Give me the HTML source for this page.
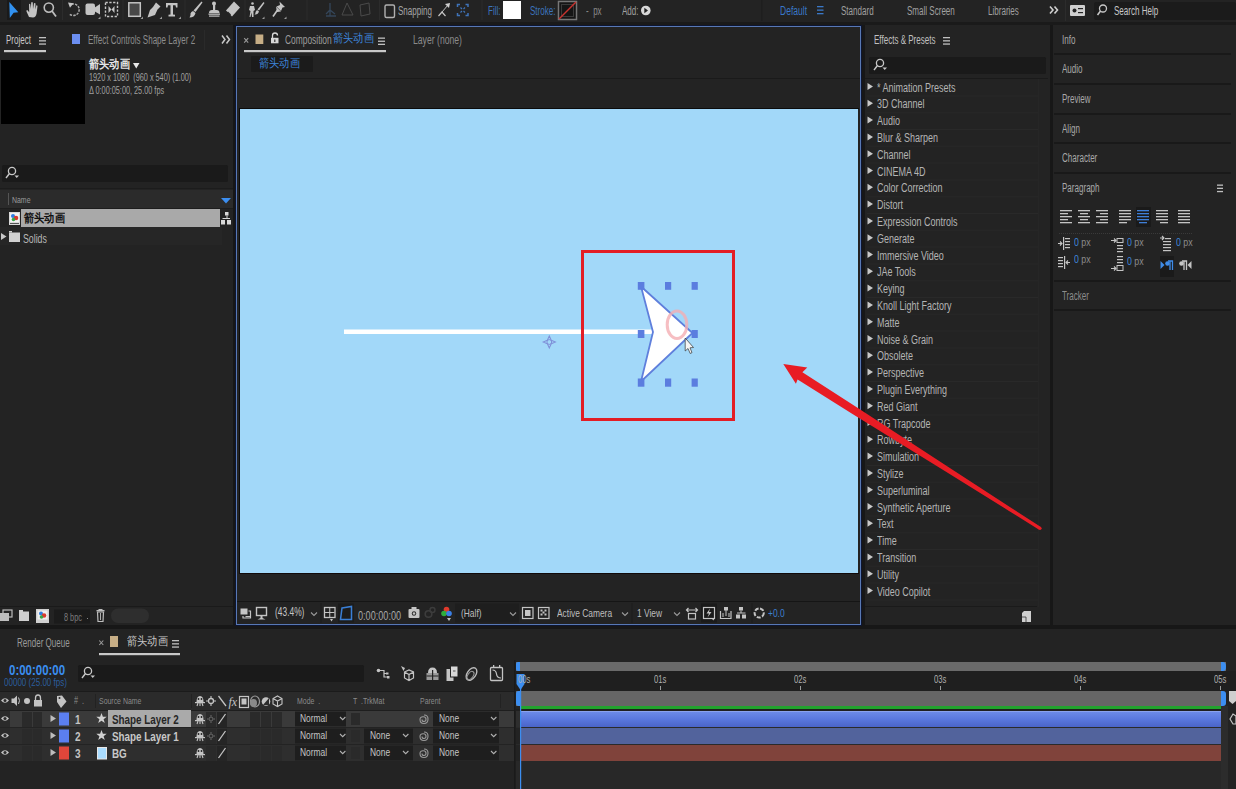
<!DOCTYPE html>
<html><head><meta charset="utf-8">
<style>
*{margin:0;padding:0;box-sizing:border-box}
html,body{width:1236px;height:789px;overflow:hidden;background:#171717}
body{position:relative;font-family:"Liberation Sans",sans-serif;color:#a8a8a8;font-size:11px}
.a{position:absolute}
.t{position:absolute;white-space:nowrap;line-height:1}
.cx{transform-origin:0 50%}
.n{transform:scaleX(.73);transform-origin:0 0}
.m{font-size:12px;transform:scaleX(.67);transform-origin:0 0}
</style></head><body>

<!-- top toolbar -->
<div class="a" style="left:0;top:0;width:1236px;height:22px;background:#232323"></div>
<div class="a" style="left:0;top:22px;width:1236px;height:3px;background:#1a1a1a"></div>
<!-- TOOLBAR -->
<svg class="a" style="left:0;top:0" width="1236" height="22" viewBox="0 0 1236 22">
<rect x="7" y="0" width="14" height="20" fill="#1a1a1a"/>
<polygon points="9.3,2 18.3,12.3 13.6,12.7 9.8,18" fill="#3191f0"/>
<!-- hand -->
<path d="M29,17 L26.5,11.5 Q26,10 27.3,10 L29.2,12.2 L29,4.5 Q29.2,3.3 30.3,4.2 L30.8,9 L31.2,2.5 Q32,1.5 32.8,2.5 L33,9 L34,3.3 Q35,2.5 35.5,3.6 L35.3,9.5 L36.3,5.5 Q37.3,5 37.5,6.2 L36.6,13.5 Q35.8,17.5 33,17.5 Z" fill="#c4c4c4"/>
<!-- zoom -->
<circle cx="48.8" cy="7.6" r="4.6" fill="none" stroke="#bdbdbd" stroke-width="1.6"/>
<line x1="52" y1="11" x2="56" y2="16.5" stroke="#bdbdbd" stroke-width="1.8"/>
<rect x="62" y="0" width="1" height="20" fill="#2c2c2c"/>
<!-- rotate -->
<path d="M71.5,4.2 A5.8,5.8 0 1 1 69.5,14" fill="none" stroke="#a9a9a9" stroke-width="1.5" stroke-dasharray="2.4,1.1"/>
<polygon points="68,2.5 73.5,3.2 70,7.8" fill="#c4c4c4"/>
<!-- camera -->
<rect x="85.5" y="3.5" width="9.5" height="11.5" rx="2" fill="#c4c4c4"/>
<polygon points="94,8 100,4 100,14.5 94,11" fill="#c4c4c4"/>
<polygon points="98,19 100.5,16.5 100.5,19" fill="#9a9a9a"/>
<!-- pan behind -->
<rect x="105.5" y="2.5" width="12" height="14" fill="none" stroke="#c4c4c4" stroke-width="1.4" stroke-dasharray="2.3,1.5"/>
<polygon points="108.5,6 111.5,9.5 108.5,13" fill="#c4c4c4"/>
<polygon points="114.5,6 111.5,9.5 114.5,13" fill="#c4c4c4"/>
<rect x="122.5" y="0" width="1" height="20" fill="#2c2c2c"/>
<!-- rect -->
<rect x="128.8" y="2.8" width="11.5" height="13.5" fill="#484848" stroke="#c4c4c4" stroke-width="1.5"/>
<polygon points="140.5,19 143,16.5 143,19" fill="#9a9a9a"/>
<!-- pen -->
<path d="M156,2.5 L160.5,6.5 L157.5,9.5 L155,15 L147.5,17.5 L150,10 L153,7 Z" fill="#c4c4c4"/>
<polygon points="159.5,19 162,16.5 162,19" fill="#9a9a9a"/>
<!-- T -->
<path d="M166,3 L177.5,3 L177.5,7.5 L176,7.5 L175.5,5.2 L173,5.2 L173,14.5 L175,14.8 L175,16.5 L168.5,16.5 L168.5,14.8 L170.5,14.5 L170.5,5.2 L168,5.2 L167.5,7.5 L166,7.5 Z" fill="#c4c4c4"/>
<polygon points="178.5,19 181,16.5 181,19" fill="#9a9a9a"/>
<rect x="184.5" y="0" width="1" height="20" fill="#2c2c2c"/>
<!-- brush -->
<path d="M201.5,1.5 L202.5,2.5 L195.5,12 L193.5,10.5 Z" fill="#c4c4c4"/>
<path d="M193,11 L195.5,13 Q194.5,17.5 189.5,17.5 Q191,15 190.5,13.5 Q191,11.5 193,11 Z" fill="#c4c4c4"/>
<!-- stamp -->
<circle cx="214" cy="3.5" r="2" fill="#c4c4c4"/>
<rect x="213" y="4" width="2.2" height="6" fill="#c4c4c4"/>
<path d="M209,13 Q209,10 212,10 L216.5,10 Q219.5,10 219.5,13 Z" fill="#c4c4c4"/>
<rect x="208.5" y="13.5" width="11.5" height="1.3" fill="#c4c4c4"/>
<rect x="209" y="15.5" width="10.5" height="1.2" fill="#c4c4c4"/>
<!-- eraser -->
<path d="M234,1.5 L240,7.5 L232,16.5 L226,10.5 Z" fill="#c4c4c4"/>
<path d="M227.5,12 L230.5,15" stroke="#262626" stroke-width="1.5"/>
<rect x="244.5" y="0" width="1" height="20" fill="#2c2c2c"/>
<!-- roto -->
<circle cx="252.5" cy="3.5" r="1.3" fill="#c4c4c4"/>
<path d="M250,6 L254,6 L255,10 L253.5,11 L253.5,17 L252,17 L251.5,12.5 L250.5,17 L249.5,17 L250.5,11 L249,10 Z" fill="#c4c4c4"/>
<path d="M263.5,2 L264.5,3 L259,10.5 L257.5,9.5 Z" fill="#c4c4c4"/>
<path d="M257,10 L259,11.5 Q258,15 254.5,14.5 Q256,13 255.5,12 Z" fill="#c4c4c4"/>
<polygon points="262,19 264.5,16.5 264.5,19" fill="#9a9a9a"/>
<!-- pin -->
<path d="M279.5,1.5 L285,7 L282.5,7.5 L281,11 L276.5,6.5 L280,5 Z" fill="#c4c4c4"/>
<path d="M276,6.5 L281,11.5 L277,12 Z" fill="#c4c4c4"/>
<line x1="277.5" y1="10" x2="273" y2="16.5" stroke="#c4c4c4" stroke-width="1.6"/>
<polygon points="284,19 286.5,16.5 286.5,19" fill="#9a9a9a"/>
<rect x="306.5" y="0" width="1" height="20" fill="#2c2c2c"/>
<!-- greyed -->
<path d="M330,3 L330,16 M326,16 L336,16 M330,10 L326,14 M330,10 L335,14" stroke="#34465a" stroke-width="1.3" fill="none"/>
<path d="M347,3 L342,15 L353,15 Z" stroke="#4a4a4a" stroke-width="1" fill="none"/>
<path d="M360,5 L369,3 L370,14 L361,16 Z" stroke="#4a4a4a" stroke-width="1" fill="none"/>
<rect x="379" y="0" width="1" height="20" fill="#2c2c2c"/>
<rect x="385" y="5" width="9.5" height="12.5" rx="1.5" fill="none" stroke="#b0b0b0" stroke-width="1.4"/>
<!-- snap icon -->
<path d="M438.5,16 L442,12 L445.5,16" stroke="#c4c4c4" stroke-width="1.2" fill="none"/>
<path d="M442,12 L448,5" stroke="#c4c4c4" stroke-width="1"/>
<polygon points="445,4 450,3 449,8" fill="#d0d0d0"/>
<!-- blue snap -->
<path d="M457.5,7 L457.5,4.5 L460,4.5 M465.5,4.5 L468,4.5 L468,7 M468,13 L468,15.5 L465.5,15.5 M460,15.5 L457.5,15.5 L457.5,13" stroke="#3f73b8" stroke-width="1.5" fill="none"/>
<path d="M460.5,7.5 L462,9 M465,7.5 L463.5,9 M460.5,12.5 L462,11 M465,12.5 L463.5,11" stroke="#3f73b8" stroke-width="1.2"/>
<rect x="481.5" y="0" width="1" height="20" fill="#2c2c2c"/>
<rect x="503" y="1" width="18" height="18" fill="#ffffff"/>
<rect x="558.5" y="1.5" width="18" height="18" fill="#151515" stroke="#777" stroke-width="1.5"/>
<rect x="561.5" y="4.5" width="12" height="12" fill="none" stroke="#3a3a3a" stroke-width="1"/>
<line x1="559" y1="19" x2="576" y2="2" stroke="#c8332e" stroke-width="1.5"/>
<circle cx="645.8" cy="10.5" r="4.8" fill="#d8d8d8"/>
<polygon points="644.3,7.8 648,10.5 644.3,13.2" fill="#232323"/>
<rect x="761" y="0" width="1.5" height="21" fill="#1e1e1e"/>
<rect x="817" y="6" width="6.5" height="1.3" fill="#3a78c8"/>
<rect x="817" y="9.5" width="6.5" height="1.3" fill="#3a78c8"/>
<rect x="817" y="13" width="6.5" height="1.3" fill="#3a78c8"/>
<path d="M1050,6.5 L1053,10 L1050,13.5 M1054.5,6.5 L1057.5,10 L1054.5,13.5" stroke="#d0d0d0" stroke-width="1.6" fill="none"/>
<rect x="1065" y="0" width="1" height="21" fill="#2c2c2c"/>
<rect x="1070" y="5" width="15" height="11" rx="1" fill="#cfcfcf"/>
<circle cx="1074.5" cy="10.5" r="2" fill="#232323"/>
<rect x="1078" y="8" width="5" height="1.2" fill="#232323"/>
<rect x="1078" y="12" width="5" height="1.2" fill="#232323"/>
<rect x="1094" y="2" width="142" height="18" rx="2" fill="#1b1b1b"/>
<circle cx="1103" cy="8.5" r="3.5" fill="none" stroke="#c8c8c8" stroke-width="1.3"/>
<line x1="1100.5" y1="11" x2="1097.5" y2="15" stroke="#c8c8c8" stroke-width="1.5"/>
</svg>
<div class="t m" style="left:398px;top:5px;color:#a5a5a5">Snapping</div>
<div class="t m" style="left:488px;top:5px;color:#3c74bd">Fill:</div>
<div class="t m" style="left:530px;top:5px;color:#3c74bd">Stroke:</div>
<div class="t m" style="left:586px;top:5px;color:#8a8a8a">-&nbsp;&nbsp;px</div>
<div class="t m" style="left:622px;top:5px;color:#a0a0a0">Add:</div>
<div class="t m" style="left:780px;top:5px;color:#3a78c8;transform:scaleX(.71)">Default</div>
<div class="t m" style="left:841px;top:5px;color:#a0a0a0">Standard</div>
<div class="t m" style="left:907px;top:5px;color:#a0a0a0">Small Screen</div>
<div class="t m" style="left:988px;top:5px;color:#a0a0a0">Libraries</div>
<div class="t m" style="left:1114px;top:5px;color:#c8c8c8">Search Help</div>


<!-- project panel -->
<div class="a" id="proj" style="left:0;top:25px;width:233px;height:600px;background:#232323"></div>
<!-- PROJECT PANEL -->
<div class="t m" style="left:6px;top:34px;color:#c8c8c8">Project</div>
<svg class="a" style="left:0;top:27px" width="233" height="598" viewBox="0 27 233 598">
<rect x="39" y="37" width="7" height="1.3" fill="#c0c0c0"/><rect x="39" y="40.2" width="7" height="1.3" fill="#c0c0c0"/><rect x="39" y="43.4" width="7" height="1.3" fill="#c0c0c0"/>
<rect x="4" y="50" width="42" height="2.2" fill="#c8c8c8"/>
<rect x="72" y="34" width="8" height="10" fill="#6b8ef0"/><rect x="204" y="30" width="1" height="20" fill="#2a2a2a"/>
<path d="M222,35.5 L225,39.5 L222,43.5 M226.5,35.5 L229.5,39.5 L226.5,43.5" stroke="#c8c8c8" stroke-width="1.5" fill="none"/>
<rect x="1" y="60" width="84" height="64" fill="#000"/>
<polygon points="133,63 139.5,63 136.25,68.5" fill="#e8e8e8"/>
<!-- search -->
<rect x="2" y="165" width="226" height="17" rx="1.5" fill="#1a1a1a"/>
<circle cx="12" cy="171" r="3.6" fill="none" stroke="#c8c8c8" stroke-width="1.3"/>
<line x1="9.5" y1="173.5" x2="6" y2="178" stroke="#c8c8c8" stroke-width="1.4"/>
<polygon points="14.5,175.5 19,175.5 16.75,178" fill="#c8c8c8"/>
<rect x="0" y="188" width="233" height="1" fill="#1c1c1c"/>
<rect x="0" y="190" width="233" height="18" fill="#2b2b2b"/>
<rect x="8" y="193" width="1" height="12" fill="#555"/>
<polygon points="221,198 231,198 226,203.5" fill="#3c8ef0"/>
<rect x="0" y="208" width="233" height="1" fill="#1d1d1d"/>
<!-- row1 -->
<rect x="9" y="212" width="11" height="13" fill="#d9d9d9"/>
<rect x="10" y="213" width="9" height="9" fill="#f2f2f2"/>
<circle cx="13" cy="216" r="2" fill="#2e7be0"/><circle cx="16" cy="218" r="2.3" fill="#d83a2e"/><circle cx="13.5" cy="219.5" r="1.8" fill="#3aa648"/>
<rect x="10" y="223" width="9" height="1" fill="#555"/>
<rect x="21" y="209" width="199" height="18" fill="#a9a9a9"/>
<rect x="225" y="212" width="3.5" height="3.5" fill="#d8d8d8"/>
<rect x="226.5" y="215.5" width="1" height="3" fill="#d8d8d8"/>
<rect x="222.5" y="218" width="7.5" height="1" fill="#d8d8d8"/>
<rect x="221" y="220" width="4" height="4.5" fill="#d8d8d8"/><rect x="227" y="220" width="4" height="4.5" fill="#d8d8d8"/>
<!-- row2 -->
<rect x="0" y="227" width="222" height="18" fill="#262626"/>
<polygon points="1,233 6.5,236.5 1,240" fill="#c8c8c8"/>
<rect x="9" y="231" width="3" height="1.5" fill="#d0d0d0"/>
<rect x="9" y="232.5" width="11" height="9.5" fill="#d0d0d0"/>
<!-- bottom bar -->
<rect x="0" y="606" width="233" height="1" fill="#1a1a1a"/>
<rect x="3" y="610" width="9" height="7" fill="none" stroke="#bdbdbd" stroke-width="1.2"/>
<rect x="0" y="613" width="9" height="8" fill="#bdbdbd"/>
<rect x="19" y="610" width="4" height="2" fill="#cfcfcf"/>
<rect x="19" y="611.5" width="10" height="9.5" fill="#cfcfcf"/>
<rect x="36" y="609" width="13" height="14" fill="#d0d0d0"/>
<rect x="37.5" y="610.5" width="10" height="9" fill="#efefef"/>
<circle cx="41" cy="613.5" r="2" fill="#2e7be0"/><circle cx="44" cy="615.5" r="2.3" fill="#d83a2e"/><circle cx="41.5" cy="617" r="1.8" fill="#3aa648"/>
<rect x="54" y="609.5" width="36" height="14" fill="#1b1b1b"/>
<rect x="87" y="618" width="1" height="1" fill="#888"/>
<rect x="96.5" y="610" width="8" height="1.4" fill="#bdbdbd"/>
<rect x="98.5" y="609" width="4" height="1.2" fill="#bdbdbd"/>
<path d="M97.5,612 L103.5,612 L103,621.5 L98,621.5 Z" fill="none" stroke="#bdbdbd" stroke-width="1.2"/>
<line x1="100.5" y1="613" x2="100.5" y2="620" stroke="#bdbdbd" stroke-width="0.9"/>
<rect x="111" y="608.5" width="38" height="14.5" rx="7.2" fill="#2e2e2e"/>
</svg>
<div class="t m" style="left:88px;top:34px;color:#8c8c8c">Effect Controls Shape Layer 2</div>
<div class="t" style="left:89px;top:58px;color:#e6e6e6;font-size:12px;font-weight:bold;transform:scaleX(.85);transform-origin:0 0">箭头动画</div>
<div class="t n" style="left:89px;top:72.5px;color:#a0a0a0;font-size:10px">1920 x 1080&nbsp; (960 x 540) (1.00)</div>
<div class="t n" style="left:89px;top:85.5px;color:#a0a0a0;font-size:10px">&Delta; 0:00:05:00, 25.00 fps</div>
<div class="t n" style="left:12px;top:194.5px;color:#9a9a9a;font-size:9.5px">Name</div>
<div class="t" style="left:24px;top:212px;color:#111;font-size:12px;font-weight:bold;transform:scaleX(.85);transform-origin:0 0">箭头动画</div>
<div class="t n" style="left:23px;top:232.5px;color:#b8b8b8;font-size:12px">Solids</div>
<div class="t n" style="left:64px;top:612.5px;color:#7c7c7c;font-size:10px">8 bpc</div>


<!-- comp panel -->
<div class="a" id="comp" style="left:236px;top:26px;width:625px;height:599px;border:1px solid #5878b4;box-shadow:0 0 0 1px #0d1530;background:#232323"></div>
<div class="a" style="left:240px;top:109px;width:618px;height:464px;background:#a2d8f9"></div>

<!-- VIEWER CONTENT -->
<svg class="a" style="left:240px;top:109px" width="618" height="464" viewBox="240 109 618 464">
<rect x="344" y="329.5" width="310" height="4.5" fill="#ffffff"/>
<path d="M549.3,336 L551.2,340.2 L555.3,342 L551.2,343.8 L549.3,348 L547.4,343.8 L543.3,342 L547.4,340.2 Z" fill="none" stroke="#7f8fd8" stroke-width="1.1"/>
<circle cx="549.3" cy="342" r="2.4" fill="none" stroke="#7f8fd8" stroke-width="1"/>
<polygon points="641,286.5 692.5,333 641,381.5 653,332" fill="#ffffff" stroke="#5f7fdc" stroke-width="1.8" stroke-linejoin="miter"/>
<ellipse cx="677" cy="324.7" rx="9.8" ry="13.8" fill="none" stroke="#f4aeb3" stroke-width="3" opacity="0.8"/>
<g fill="#5b7ddf">
<rect x="637.8" y="282" width="6.6" height="7.8"/><rect x="665" y="282" width="6.2" height="7.8"/><rect x="691.6" y="282" width="6.2" height="7.8"/>
<rect x="637.8" y="330" width="6.6" height="8"/><rect x="691.6" y="330" width="6.2" height="8"/>
<rect x="637.8" y="378.5" width="6.6" height="8.2"/><rect x="665" y="378.5" width="6.2" height="8.2"/><rect x="691.6" y="378.5" width="6.2" height="8.2"/>
</g>
<path d="M685.2,338 L685.2,351 L688,348.5 L690.2,353.5 L692,352.6 L690,347.8 L693.5,347.5 Z" fill="#f4f4f4" stroke="#333" stroke-width="0.7"/>
<rect x="582.5" y="251.5" width="151" height="168" fill="none" stroke="#e31d25" stroke-width="3"/>

</svg>

<!-- COMP PANEL -->
<svg class="a" style="left:236px;top:26px" width="626" height="600" viewBox="236 26 626 600">
<path d="M244.2,38.2 L248.2,42.6 M248.2,38.2 L244.2,42.6" stroke="#9a9a9a" stroke-width="1.1"/>
<rect x="255.5" y="34.5" width="7.8" height="9.5" fill="#c7ae86"/>
<path d="M272.5,38 L272.5,35.5 Q272.5,33 275,33 Q277.5,33 277.5,35.5" fill="none" stroke="#d8d8d8" stroke-width="1.3"/>
<rect x="271" y="37.8" width="7.5" height="5.5" fill="#d8d8d8"/>
<rect x="274.2" y="39.5" width="1.2" height="2.5" fill="#333"/>
<rect x="378" y="37.5" width="7" height="1.3" fill="#c0c0c0"/><rect x="378" y="40.6" width="7" height="1.3" fill="#c0c0c0"/><rect x="378" y="43.7" width="7" height="1.3" fill="#c0c0c0"/>
<rect x="244" y="50" width="142" height="2.2" fill="#c8c8c8"/>
<rect x="251" y="56" width="62" height="16" rx="1" fill="#1b1b1b"/>
<rect x="237" y="78" width="623" height="1" fill="#1a1a1a"/>
<rect x="239" y="108" width="620" height="1" fill="#0c0c0c"/>
<rect x="239" y="108" width="1" height="465" fill="#0c0c0c"/>
<rect x="239" y="573" width="620" height="1" fill="#120a0a"/>
<rect x="237" y="601" width="623" height="1" fill="#151515"/>
<!-- bottom toolbar icons -->
<rect x="240.5" y="608.5" width="7" height="6" fill="#c4c4c4"/>
<path d="M248.5,611 L250.5,611 L250.5,618 L243,618 L243,616" fill="none" stroke="#c4c4c4" stroke-width="1.2"/>
<rect x="245.5" y="616" width="5" height="1.2" fill="#c4c4c4"/>
<rect x="256.5" y="607.5" width="10" height="8" fill="none" stroke="#c4c4c4" stroke-width="1.4"/>
<rect x="260.5" y="616" width="2" height="2" fill="#c4c4c4"/>
<polygon points="257.5,619.5 265.5,619.5 261.5,617.5" fill="#c4c4c4"/>
<path d="M311,612.5 L314,615.5 L317,612.5" stroke="#9a9a9a" stroke-width="1.1" fill="none"/>
<rect x="320.5" y="603" width="1" height="20" fill="#1c1c1c"/>
<rect x="324.5" y="607.5" width="10.5" height="10" fill="none" stroke="#c4c4c4" stroke-width="1.3"/>
<path d="M329.75,608 L329.75,617 M325,612.5 L334.5,612.5" stroke="#c4c4c4" stroke-width="1"/>
<polygon points="330,619 333,619 331.5,621.5" fill="#c4c4c4"/>
<rect x="338" y="603.5" width="16" height="19" fill="#1c1c1c"/>
<path d="M342,608 L351.5,606.5 L351.5,619.5 L340.5,619.5 Z" fill="none" stroke="#3a7fd6" stroke-width="1.5"/>
<rect x="408.5" y="609" width="11" height="9" rx="1" fill="#c4c4c4"/>
<rect x="411.5" y="607" width="5" height="2.5" fill="#c4c4c4"/>
<circle cx="414" cy="613.5" r="2.2" fill="#2a2a2a"/><circle cx="414" cy="613.5" r="1.2" fill="#c4c4c4"/>
<circle cx="428.5" cy="614" r="3.3" fill="none" stroke="#3c3c3c" stroke-width="1.6"/>
<circle cx="432.5" cy="610" r="2.5" fill="none" stroke="#3c3c3c" stroke-width="1.4"/>
<circle cx="446.5" cy="609.5" r="2.8" fill="#e03a2c"/>
<circle cx="444" cy="613.5" r="2.8" fill="#2fae3c"/>
<circle cx="449" cy="613.5" r="2.8" fill="#3a7fe6"/>
<polygon points="447,618 451,618 449,621" fill="#c4c4c4"/>
<rect x="455" y="603.5" width="64" height="19" fill="#1e1e1e"/>
<path d="M510,612.5 L513,615.5 L516,612.5" stroke="#9a9a9a" stroke-width="1.1" fill="none"/>
<rect x="522.5" y="607.5" width="10.5" height="11" fill="none" stroke="#c4c4c4" stroke-width="1.2"/>
<rect x="525" y="610" width="5.5" height="6" fill="#c4c4c4"/>
<rect x="538.5" y="607.5" width="10.5" height="11" fill="none" stroke="#c4c4c4" stroke-width="1.2"/>
<rect x="540.5" y="609.5" width="2" height="2" fill="#c4c4c4"/><rect x="544.5" y="609.5" width="2" height="2" fill="#c4c4c4"/>
<rect x="542.5" y="611.5" width="2" height="2" fill="#c4c4c4"/>
<rect x="540.5" y="613.5" width="2" height="2" fill="#c4c4c4"/><rect x="544.5" y="613.5" width="2" height="2" fill="#c4c4c4"/>
<path d="M622,612.5 L625,615.5 L628,612.5" stroke="#9a9a9a" stroke-width="1.1" fill="none"/>
<rect x="631.5" y="603" width="1" height="20" fill="#1c1c1c"/>
<path d="M674,612.5 L677,615.5 L680,612.5" stroke="#9a9a9a" stroke-width="1.1" fill="none"/>
<path d="M686.5,610 L697.5,610 M688.5,608 L686.5,610 L688.5,612 M695.5,608 L697.5,610 L695.5,612" stroke="#c4c4c4" stroke-width="1.2" fill="none"/>
<rect x="688.5" y="613.5" width="7" height="5.5" fill="none" stroke="#c4c4c4" stroke-width="1.2"/>
<rect x="701" y="603.5" width="16" height="19" fill="#1a1a1a"/>
<rect x="703.5" y="607.5" width="11" height="11" fill="none" stroke="#c4c4c4" stroke-width="1.2"/>
<path d="M710,608.5 L706.5,613.5 L709,613.5 L707.5,617.5 L711.5,612 L709,612 Z" fill="#c4c4c4"/>
<polygon points="711.5,618 715,618 713.25,620.5" fill="#c4c4c4"/>
<path d="M720.5,611 L720.5,618.5 L731,618.5 L731,611" fill="none" stroke="#c4c4c4" stroke-width="1.2"/>
<rect x="724" y="607" width="4" height="3.5" fill="#c4c4c4"/><rect x="725.5" y="610" width="1" height="6" fill="#c4c4c4"/>
<rect x="722.5" y="613" width="1" height="4" fill="#c4c4c4"/><rect x="728.5" y="613" width="1" height="4" fill="#c4c4c4"/>
<rect x="739" y="607" width="4" height="3.5" fill="#c4c4c4"/>
<rect x="740.5" y="610.5" width="1" height="2.5" fill="#c4c4c4"/>
<rect x="737" y="612.5" width="8.5" height="1" fill="#c4c4c4"/>
<rect x="736" y="614.5" width="4" height="4" fill="#c4c4c4"/><rect x="742" y="614.5" width="4" height="4" fill="#c4c4c4"/>
<rect x="751.5" y="603" width="1" height="20" fill="#1c1c1c"/>
<circle cx="759.2" cy="613" r="4.6" fill="none" stroke="#c4c4c4" stroke-width="2" stroke-dasharray="4,1.5"/>
</svg>
<div class="t m" style="left:285px;top:33.5px;color:#9c9c9c;transform:scaleX(.7)">Composition</div>
<div class="t" style="left:333px;top:32px;color:#3d86dc;font-size:12px;transform:scaleX(.85);transform-origin:0 0">箭头动画</div>
<div class="t m" style="left:413px;top:33.5px;color:#8a8a8a;transform:scaleX(.72)">Layer (none)</div>
<div class="t" style="left:259px;top:57px;color:#3d86dc;font-size:12px;transform:scaleX(.85);transform-origin:0 0">箭头动画</div>
<div class="t" style="left:275px;top:606px;color:#c4c4c4;font-size:12px;transform:scaleX(.7);transform-origin:0 0">(43.4%)</div>
<div class="t" style="left:358px;top:609.5px;color:#a8a8a8;font-size:12px;transform:scaleX(.76);transform-origin:0 0">0:00:00:00</div>
<div class="t n" style="left:461px;top:607.5px;color:#bdbdbd;font-size:11.5px">(Half)</div>
<div class="t n" style="left:557px;top:607.5px;color:#bdbdbd;font-size:11.5px">Active Camera</div>
<div class="t n" style="left:637px;top:607.5px;color:#bdbdbd;font-size:11.5px">1 View</div>
<div class="t n" style="left:768px;top:607.5px;color:#3d7fcf;font-size:11.5px">+0.0</div>


<!-- effects panel -->
<div class="a" id="fx" style="left:865px;top:25px;width:185px;height:600px;background:#232323"></div>
<!-- EFFECTS -->
<svg class="a" style="left:865px;top:27px" width="188" height="598" viewBox="865 27 188 598">
<rect x="943" y="37" width="7" height="1.3" fill="#c0c0c0"/><rect x="943" y="40.2" width="7" height="1.3" fill="#c0c0c0"/><rect x="943" y="43.4" width="7" height="1.3" fill="#c0c0c0"/>
<rect x="869" y="57" width="177" height="17" rx="1.5" fill="#1a1a1a"/>
<circle cx="880" cy="63" r="3.6" fill="none" stroke="#c8c8c8" stroke-width="1.3"/><line x1="877.5" y1="65.5" x2="874" y2="70" stroke="#c8c8c8" stroke-width="1.4"/><polygon points="882.5,67.5 887,67.5 884.75,70" fill="#c8c8c8"/>
<rect x="865" y="78" width="183" height="1" fill="#1a1a1a"/>
<polygon points="867.5,83.0 873,86.5 867.5,90.0" fill="#c8c8c8"/>
<rect x="867" y="95.4" width="171" height="1" fill="#292929"/>
<polygon points="867.5,99.8 873,103.3 867.5,106.8" fill="#c8c8c8"/>
<rect x="867" y="112.2" width="171" height="1" fill="#292929"/>
<polygon points="867.5,116.6 873,120.1 867.5,123.6" fill="#c8c8c8"/>
<rect x="867" y="129.0" width="171" height="1" fill="#292929"/>
<polygon points="867.5,133.4 873,136.9 867.5,140.4" fill="#c8c8c8"/>
<rect x="867" y="145.8" width="171" height="1" fill="#292929"/>
<polygon points="867.5,150.2 873,153.7 867.5,157.2" fill="#c8c8c8"/>
<rect x="867" y="162.6" width="171" height="1" fill="#292929"/>
<polygon points="867.5,167.0 873,170.5 867.5,174.0" fill="#c8c8c8"/>
<rect x="867" y="179.4" width="171" height="1" fill="#292929"/>
<polygon points="867.5,183.8 873,187.3 867.5,190.8" fill="#c8c8c8"/>
<rect x="867" y="196.2" width="171" height="1" fill="#292929"/>
<polygon points="867.5,200.6 873,204.1 867.5,207.6" fill="#c8c8c8"/>
<rect x="867" y="213.0" width="171" height="1" fill="#292929"/>
<polygon points="867.5,217.4 873,220.9 867.5,224.4" fill="#c8c8c8"/>
<rect x="867" y="229.8" width="171" height="1" fill="#292929"/>
<polygon points="867.5,234.2 873,237.7 867.5,241.2" fill="#c8c8c8"/>
<rect x="867" y="246.6" width="171" height="1" fill="#292929"/>
<polygon points="867.5,251.0 873,254.5 867.5,258.0" fill="#c8c8c8"/>
<rect x="867" y="263.4" width="171" height="1" fill="#292929"/>
<polygon points="867.5,267.8 873,271.3 867.5,274.8" fill="#c8c8c8"/>
<rect x="867" y="280.2" width="171" height="1" fill="#292929"/>
<polygon points="867.5,284.6 873,288.1 867.5,291.6" fill="#c8c8c8"/>
<rect x="867" y="297.0" width="171" height="1" fill="#292929"/>
<polygon points="867.5,301.4 873,304.9 867.5,308.4" fill="#c8c8c8"/>
<rect x="867" y="313.8" width="171" height="1" fill="#292929"/>
<polygon points="867.5,318.2 873,321.7 867.5,325.2" fill="#c8c8c8"/>
<rect x="867" y="330.6" width="171" height="1" fill="#292929"/>
<polygon points="867.5,335.0 873,338.5 867.5,342.0" fill="#c8c8c8"/>
<rect x="867" y="347.4" width="171" height="1" fill="#292929"/>
<polygon points="867.5,351.8 873,355.3 867.5,358.8" fill="#c8c8c8"/>
<rect x="867" y="364.2" width="171" height="1" fill="#292929"/>
<polygon points="867.5,368.6 873,372.1 867.5,375.6" fill="#c8c8c8"/>
<rect x="867" y="381.0" width="171" height="1" fill="#292929"/>
<polygon points="867.5,385.4 873,388.9 867.5,392.4" fill="#c8c8c8"/>
<rect x="867" y="397.8" width="171" height="1" fill="#292929"/>
<polygon points="867.5,402.2 873,405.7 867.5,409.2" fill="#c8c8c8"/>
<rect x="867" y="414.6" width="171" height="1" fill="#292929"/>
<polygon points="867.5,419.0 873,422.5 867.5,426.0" fill="#c8c8c8"/>
<rect x="867" y="431.4" width="171" height="1" fill="#292929"/>
<polygon points="867.5,435.8 873,439.3 867.5,442.8" fill="#c8c8c8"/>
<rect x="867" y="448.2" width="171" height="1" fill="#292929"/>
<polygon points="867.5,452.6 873,456.1 867.5,459.6" fill="#c8c8c8"/>
<rect x="867" y="465.0" width="171" height="1" fill="#292929"/>
<polygon points="867.5,469.4 873,472.9 867.5,476.4" fill="#c8c8c8"/>
<rect x="867" y="481.8" width="171" height="1" fill="#292929"/>
<polygon points="867.5,486.2 873,489.7 867.5,493.2" fill="#c8c8c8"/>
<rect x="867" y="498.6" width="171" height="1" fill="#292929"/>
<polygon points="867.5,503.0 873,506.5 867.5,510.0" fill="#c8c8c8"/>
<rect x="867" y="515.4" width="171" height="1" fill="#292929"/>
<polygon points="867.5,519.8 873,523.3 867.5,526.8" fill="#c8c8c8"/>
<rect x="867" y="532.2" width="171" height="1" fill="#292929"/>
<polygon points="867.5,536.6 873,540.1 867.5,543.6" fill="#c8c8c8"/>
<rect x="867" y="549.0" width="171" height="1" fill="#292929"/>
<polygon points="867.5,553.4 873,556.9 867.5,560.4" fill="#c8c8c8"/>
<rect x="867" y="565.8" width="171" height="1" fill="#292929"/>
<polygon points="867.5,570.2 873,573.7 867.5,577.2" fill="#c8c8c8"/>
<rect x="867" y="582.6" width="171" height="1" fill="#292929"/>
<polygon points="867.5,587.0 873,590.5 867.5,594.0" fill="#c8c8c8"/>
<rect x="867" y="599.4" width="171" height="1" fill="#292929"/>
<rect x="865" y="606" width="172" height="1" fill="#1a1a1a"/>
<rect x="1038" y="79" width="1" height="528" fill="#262626"/>
<path d="M1024,611 L1031,611 L1031,622 L1022,622 L1022,613 Z" fill="#cfcfcf"/><path d="M1022,617 L1026,617 L1026,622" fill="none" stroke="#333" stroke-width="0.8"/>
</svg>
<div class="t m" style="left:874px;top:33.5px;color:#c0c0c0">Effects &amp; Presets</div>
<div class="t" style="left:877px;top:81.5px;color:#b4b4b4;font-size:12px;transform:scaleX(.75);transform-origin:0 0">* Animation Presets</div>
<div class="t" style="left:877px;top:98.3px;color:#b4b4b4;font-size:12px;transform:scaleX(.75);transform-origin:0 0">3D Channel</div>
<div class="t" style="left:877px;top:115.1px;color:#b4b4b4;font-size:12px;transform:scaleX(.75);transform-origin:0 0">Audio</div>
<div class="t" style="left:877px;top:131.9px;color:#b4b4b4;font-size:12px;transform:scaleX(.75);transform-origin:0 0">Blur &amp; Sharpen</div>
<div class="t" style="left:877px;top:148.7px;color:#b4b4b4;font-size:12px;transform:scaleX(.75);transform-origin:0 0">Channel</div>
<div class="t" style="left:877px;top:165.5px;color:#b4b4b4;font-size:12px;transform:scaleX(.75);transform-origin:0 0">CINEMA 4D</div>
<div class="t" style="left:877px;top:182.3px;color:#b4b4b4;font-size:12px;transform:scaleX(.75);transform-origin:0 0">Color Correction</div>
<div class="t" style="left:877px;top:199.1px;color:#b4b4b4;font-size:12px;transform:scaleX(.75);transform-origin:0 0">Distort</div>
<div class="t" style="left:877px;top:215.9px;color:#b4b4b4;font-size:12px;transform:scaleX(.75);transform-origin:0 0">Expression Controls</div>
<div class="t" style="left:877px;top:232.7px;color:#b4b4b4;font-size:12px;transform:scaleX(.75);transform-origin:0 0">Generate</div>
<div class="t" style="left:877px;top:249.5px;color:#b4b4b4;font-size:12px;transform:scaleX(.75);transform-origin:0 0">Immersive Video</div>
<div class="t" style="left:877px;top:266.3px;color:#b4b4b4;font-size:12px;transform:scaleX(.75);transform-origin:0 0">JAe Tools</div>
<div class="t" style="left:877px;top:283.1px;color:#b4b4b4;font-size:12px;transform:scaleX(.75);transform-origin:0 0">Keying</div>
<div class="t" style="left:877px;top:299.9px;color:#b4b4b4;font-size:12px;transform:scaleX(.75);transform-origin:0 0">Knoll Light Factory</div>
<div class="t" style="left:877px;top:316.7px;color:#b4b4b4;font-size:12px;transform:scaleX(.75);transform-origin:0 0">Matte</div>
<div class="t" style="left:877px;top:333.5px;color:#b4b4b4;font-size:12px;transform:scaleX(.75);transform-origin:0 0">Noise &amp; Grain</div>
<div class="t" style="left:877px;top:350.3px;color:#b4b4b4;font-size:12px;transform:scaleX(.75);transform-origin:0 0">Obsolete</div>
<div class="t" style="left:877px;top:367.1px;color:#b4b4b4;font-size:12px;transform:scaleX(.75);transform-origin:0 0">Perspective</div>
<div class="t" style="left:877px;top:383.9px;color:#b4b4b4;font-size:12px;transform:scaleX(.75);transform-origin:0 0">Plugin Everything</div>
<div class="t" style="left:877px;top:400.7px;color:#b4b4b4;font-size:12px;transform:scaleX(.75);transform-origin:0 0">Red Giant</div>
<div class="t" style="left:877px;top:417.5px;color:#b4b4b4;font-size:12px;transform:scaleX(.75);transform-origin:0 0">RG Trapcode</div>
<div class="t" style="left:877px;top:434.3px;color:#b4b4b4;font-size:12px;transform:scaleX(.75);transform-origin:0 0">Rowbyte</div>
<div class="t" style="left:877px;top:451.1px;color:#b4b4b4;font-size:12px;transform:scaleX(.75);transform-origin:0 0">Simulation</div>
<div class="t" style="left:877px;top:467.9px;color:#b4b4b4;font-size:12px;transform:scaleX(.75);transform-origin:0 0">Stylize</div>
<div class="t" style="left:877px;top:484.7px;color:#b4b4b4;font-size:12px;transform:scaleX(.75);transform-origin:0 0">Superluminal</div>
<div class="t" style="left:877px;top:501.5px;color:#b4b4b4;font-size:12px;transform:scaleX(.75);transform-origin:0 0">Synthetic Aperture</div>
<div class="t" style="left:877px;top:518.3px;color:#b4b4b4;font-size:12px;transform:scaleX(.75);transform-origin:0 0">Text</div>
<div class="t" style="left:877px;top:535.1px;color:#b4b4b4;font-size:12px;transform:scaleX(.75);transform-origin:0 0">Time</div>
<div class="t" style="left:877px;top:551.9px;color:#b4b4b4;font-size:12px;transform:scaleX(.75);transform-origin:0 0">Transition</div>
<div class="t" style="left:877px;top:568.7px;color:#b4b4b4;font-size:12px;transform:scaleX(.75);transform-origin:0 0">Utility</div>
<div class="t" style="left:877px;top:585.5px;color:#b4b4b4;font-size:12px;transform:scaleX(.75);transform-origin:0 0">Video Copilot</div>


<!-- right panel -->
<div class="a" id="rp" style="left:1053px;top:25px;width:183px;height:600px;background:#232323"></div>
<!-- RIGHT -->
<svg class="a" style="left:1053px;top:27px" width="183" height="598" viewBox="1053 27 183 598">
<rect x="1054" y="53" width="177" height="2" fill="#191919"/>
<rect x="1054" y="83" width="177" height="2" fill="#191919"/>
<rect x="1054" y="113" width="177" height="2" fill="#191919"/>
<rect x="1054" y="142" width="177" height="2" fill="#191919"/>
<rect x="1054" y="172" width="177" height="2" fill="#191919"/>
<rect x="1054" y="280" width="177" height="2" fill="#191919"/>
<rect x="1054" y="309" width="177" height="2" fill="#191919"/>
<rect x="1217" y="184.5" width="6" height="1.3" fill="#c0c0c0"/><rect x="1217" y="187.7" width="6" height="1.3" fill="#c0c0c0"/><rect x="1217" y="190.9" width="6" height="1.3" fill="#c0c0c0"/>
<rect x="1136" y="207" width="15" height="20" fill="#1a1a1a"/>
<rect x="1060" y="210" width="12" height="1.3" fill="#c4c4c4"/><rect x="1060" y="213" width="8" height="1.3" fill="#c4c4c4"/><rect x="1060" y="216" width="12" height="1.3" fill="#c4c4c4"/><rect x="1060" y="219" width="8" height="1.3" fill="#c4c4c4"/><rect x="1060" y="222" width="12" height="1.3" fill="#c4c4c4"/>
<rect x="1078" y="210" width="12" height="1.3" fill="#c4c4c4"/><rect x="1080" y="213" width="8" height="1.3" fill="#c4c4c4"/><rect x="1078" y="216" width="12" height="1.3" fill="#c4c4c4"/><rect x="1080" y="219" width="8" height="1.3" fill="#c4c4c4"/><rect x="1078" y="222" width="12" height="1.3" fill="#c4c4c4"/>
<rect x="1096" y="210" width="12" height="1.3" fill="#c4c4c4"/><rect x="1100" y="213" width="8" height="1.3" fill="#c4c4c4"/><rect x="1096" y="216" width="12" height="1.3" fill="#c4c4c4"/><rect x="1100" y="219" width="8" height="1.3" fill="#c4c4c4"/><rect x="1096" y="222" width="12" height="1.3" fill="#c4c4c4"/>
<rect x="1119" y="210" width="12" height="1.3" fill="#c4c4c4"/><rect x="1119" y="213" width="12" height="1.3" fill="#c4c4c4"/><rect x="1119" y="216" width="12" height="1.3" fill="#c4c4c4"/><rect x="1119" y="219" width="12" height="1.3" fill="#c4c4c4"/><rect x="1119" y="222" width="8" height="1.3" fill="#c4c4c4"/>
<rect x="1137" y="210" width="12" height="1.3" fill="#3f7fd8"/><rect x="1137" y="213" width="12" height="1.3" fill="#3f7fd8"/><rect x="1137" y="216" width="12" height="1.3" fill="#3f7fd8"/><rect x="1137" y="219" width="12" height="1.3" fill="#3f7fd8"/><rect x="1139" y="222" width="8" height="1.3" fill="#3f7fd8"/>
<rect x="1156" y="210" width="12" height="1.3" fill="#c4c4c4"/><rect x="1156" y="213" width="12" height="1.3" fill="#c4c4c4"/><rect x="1156" y="216" width="12" height="1.3" fill="#c4c4c4"/><rect x="1156" y="219" width="12" height="1.3" fill="#c4c4c4"/><rect x="1160" y="222" width="8" height="1.3" fill="#c4c4c4"/>
<rect x="1178" y="210" width="12" height="1.3" fill="#c4c4c4"/><rect x="1178" y="213" width="12" height="1.3" fill="#c4c4c4"/><rect x="1178" y="216" width="12" height="1.3" fill="#c4c4c4"/><rect x="1178" y="219" width="12" height="1.3" fill="#c4c4c4"/><rect x="1178" y="222" width="12" height="1.3" fill="#c4c4c4"/>
<line x1="1059" y1="233.5" x2="1192" y2="233.5" stroke="#3a3a3a" stroke-width="1" stroke-dasharray="1,1"/>
<rect x="1063" y="237" width="1.2" height="13" fill="#c4c4c4"/><rect x="1065" y="238" width="5" height="1.2" fill="#c4c4c4"/><rect x="1065" y="241" width="5" height="1.2" fill="#c4c4c4"/><rect x="1065" y="244" width="5" height="1.2" fill="#c4c4c4"/><rect x="1065" y="247" width="5" height="1.2" fill="#c4c4c4"/><path d="M1058,243.5 L1062,243.5 M1060,241.5 L1062,243.5 L1060,245.5" stroke="#c4c4c4" stroke-width="1.1" fill="none"/>
<rect x="1064" y="256" width="1.2" height="13" fill="#c4c4c4"/><rect x="1058" y="257" width="5" height="1.2" fill="#c4c4c4"/><rect x="1058" y="260" width="5" height="1.2" fill="#c4c4c4"/><rect x="1058" y="263" width="5" height="1.2" fill="#c4c4c4"/><rect x="1058" y="266" width="5" height="1.2" fill="#c4c4c4"/><path d="M1070,262.5 L1066,262.5 M1068,260.5 L1066,262.5 L1068,264.5" stroke="#c4c4c4" stroke-width="1.1" fill="none"/>
<path d="M1111,240.5 L1116,240.5 M1114,238.5 L1116,240.5 L1114,242.5" stroke="#c4c4c4" stroke-width="1.1" fill="none"/><rect x="1117" y="238.5" width="6" height="4" fill="none" stroke="#c4c4c4" stroke-width="1"/><rect x="1117" y="245" width="6" height="1.2" fill="#c4c4c4"/><rect x="1117" y="248" width="6" height="1.2" fill="#c4c4c4"/><rect x="1117" y="251" width="6" height="1.2" fill="#c4c4c4"/>
<rect x="1117" y="256" width="6" height="1.2" fill="#c4c4c4"/><rect x="1117" y="259" width="6" height="1.2" fill="#c4c4c4"/><rect x="1117" y="262" width="6" height="1.2" fill="#c4c4c4"/><path d="M1111,268.5 L1116,268.5 M1114,266.5 L1116,268.5 L1114,270.5" stroke="#c4c4c4" stroke-width="1.1" fill="none"/><rect x="1117" y="265.5" width="6" height="5" fill="none" stroke="#c4c4c4" stroke-width="1"/>
<path d="M1160,238 L1164,238 M1162,236 L1164,238 L1162,240" stroke="#c4c4c4" stroke-width="1.1" fill="none"/><rect x="1165" y="238" width="6" height="1.2" fill="#c4c4c4"/><rect x="1163" y="241" width="8" height="1.2" fill="#c4c4c4"/><rect x="1163" y="244" width="8" height="1.2" fill="#c4c4c4"/><rect x="1163" y="247" width="8" height="1.2" fill="#c4c4c4"/><rect x="1163" y="250" width="8" height="1.2" fill="#c4c4c4"/>
<rect x="1160" y="256" width="14" height="21" fill="#1a1a1a"/>
<polygon points="1160.5,261 1164.5,265 1160.5,269" fill="#3f8ce8"/><path d="M1168,261 L1172.5,261 L1172.5,270 M1170,261 L1170,270" stroke="#3f8ce8" stroke-width="1.3" fill="none"/><circle cx="1167.5" cy="263.5" r="2.3" fill="#3f8ce8"/>
<path d="M1182,261 L1186.5,261 L1186.5,270 M1184,261 L1184,270" stroke="#c4c4c4" stroke-width="1.3" fill="none"/><circle cx="1181.5" cy="263.5" r="2.3" fill="#c4c4c4"/><polygon points="1191.5,261 1187.5,265 1191.5,269" fill="#c4c4c4"/>
</svg>
<div class="t m" style="left:1062px;top:33.5px;color:#a8a8a8">Info</div>
<div class="t m" style="left:1062px;top:63.0px;color:#a8a8a8">Audio</div>
<div class="t m" style="left:1062px;top:92.5px;color:#a8a8a8">Preview</div>
<div class="t m" style="left:1062px;top:122.5px;color:#a8a8a8">Align</div>
<div class="t m" style="left:1062px;top:151.5px;color:#a8a8a8">Character</div>
<div class="t m" style="left:1062px;top:181.5px;color:#a8a8a8">Paragraph</div>
<div class="t m" style="left:1062px;top:290px;color:#8c8c8c">Tracker</div>
<div class="t" style="left:1074px;top:237px;font-size:11px;transform:scaleX(.8);transform-origin:0 0"><span style="color:#3f86dc">0</span> <span style="color:#8c8c8c">px</span></div>
<div class="t" style="left:1127px;top:237px;font-size:11px;transform:scaleX(.8);transform-origin:0 0"><span style="color:#3f86dc">0</span> <span style="color:#8c8c8c">px</span></div>
<div class="t" style="left:1176px;top:237px;font-size:11px;transform:scaleX(.8);transform-origin:0 0"><span style="color:#3f86dc">0</span> <span style="color:#8c8c8c">px</span></div>
<div class="t" style="left:1074px;top:254px;font-size:11px;transform:scaleX(.8);transform-origin:0 0"><span style="color:#3f86dc">0</span> <span style="color:#8c8c8c">px</span></div>
<div class="t" style="left:1127px;top:256px;font-size:11px;transform:scaleX(.8);transform-origin:0 0"><span style="color:#3f86dc">0</span> <span style="color:#8c8c8c">px</span></div>


<!-- timeline -->
<div class="a" id="tl" style="left:0;top:629px;width:1236px;height:160px;background:#232323"></div>
<!-- TIMELINE -->
<svg class="a" style="left:0;top:629px" width="1236" height="160" viewBox="0 629 1236 160">
<path d="M99.3,640.5 L103.3,645 M103.3,640.5 L99.3,645" stroke="#9a9a9a" stroke-width="1.1"/>
<rect x="110" y="636" width="8" height="11" fill="#c7ae86"/>
<rect x="172" y="640" width="7" height="1.3" fill="#c0c0c0"/><rect x="172" y="643.2" width="7" height="1.3" fill="#c0c0c0"/><rect x="172" y="646.4" width="7" height="1.3" fill="#c0c0c0"/>
<rect x="99" y="653" width="81" height="2.2" fill="#c8c8c8"/>
<rect x="78" y="665" width="286" height="17" rx="1.5" fill="#1a1a1a"/>
<circle cx="88" cy="671" r="3.6" fill="none" stroke="#c8c8c8" stroke-width="1.3"/><line x1="85.5" y1="673.5" x2="82" y2="678" stroke="#c8c8c8" stroke-width="1.4"/><polygon points="90.5,675.5 95,675.5 92.75,678" fill="#c8c8c8"/>
<circle cx="378.5" cy="670.5" r="1.8" fill="#c4c4c4"/><path d="M380,670.5 L384,670.5 L384,677 L388,677 M384,673.5 L386,673.5" stroke="#c4c4c4" stroke-width="1.2" fill="none"/><rect x="386" y="672.5" width="2.5" height="2" fill="#c4c4c4"/><rect x="387" y="676" width="2.5" height="2.5" fill="#c4c4c4"/>
<path d="M401,666 L403.5,671 L405,668 Z" fill="#c4c4c4"/><path d="M404.5,672 L409,670 L413.5,672 L413.5,678 L409,680.5 L404.5,678 Z M404.5,672 L409,674.5 L413.5,672 M409,674.5 L409,680.5" fill="none" stroke="#c4c4c4" stroke-width="1.2"/>
<path d="M428,673 Q428,667.5 432.5,667.5 Q437,667.5 437,673 Z" fill="#c4c4c4"/><rect x="426.5" y="673" width="12" height="7" fill="#9a9a9a"/><rect x="432" y="670" width="1.2" height="10" fill="#232323"/><rect x="426.5" y="675.5" width="12" height="1" fill="#232323"/>
<rect x="446.5" y="669" width="7" height="12" fill="#c4c4c4"/><rect x="450.5" y="666" width="7.5" height="11" fill="#d8d8d8" stroke="#232323" stroke-width="1"/><rect x="453" y="670.5" width="2.5" height="1" fill="#555"/>
<ellipse cx="471.5" cy="674" rx="4.3" ry="7" transform="rotate(35 471.5 674)" fill="none" stroke="#bdbdbd" stroke-width="1.4"/><ellipse cx="470.5" cy="675.5" rx="2.6" ry="4.6" transform="rotate(35 470.5 675.5)" fill="none" stroke="#9a9a9a" stroke-width="1.1"/>
<rect x="490.5" y="667.5" width="12" height="13" rx="1" fill="none" stroke="#c4c4c4" stroke-width="1.3"/><rect x="493" y="665" width="1.3" height="3" fill="#c4c4c4"/><rect x="499" y="665" width="1.3" height="3" fill="#c4c4c4"/><path d="M492.5,670 Q496,670 496.5,674 Q497,678 501,678" fill="none" stroke="#c4c4c4" stroke-width="1.2"/>
<rect x="0" y="691" width="514" height="1" fill="#1b1b1b"/>
<rect x="0" y="692" width="514" height="18" fill="#2b2b2b"/>
<rect x="0" y="710" width="514" height="1" fill="#1e1e1e"/>
<path d="M1,700.5 Q5,696 9,700.5 Q5,705 1,700.5 Z" fill="#c4c4c4"/><circle cx="5" cy="700.5" r="1.5" fill="#2b2b2b"/>
<path d="M11.5,698.5 L14,698.5 L17,695.5 L17,706 L14,703 L11.5,703 Z" fill="#c4c4c4"/><path d="M18.5,697.5 Q20.5,700.5 18.5,704" stroke="#c4c4c4" stroke-width="1" fill="none"/>
<circle cx="27" cy="701" r="3" fill="#c4c4c4"/>
<path d="M35.5,700 L35.5,698 Q35.5,695 38,695 Q40.5,695 40.5,698 L40.5,700" fill="none" stroke="#c4c4c4" stroke-width="1.3"/><rect x="34" y="700" width="8" height="6.5" fill="#c4c4c4"/>
<path d="M57,696 L62,695.5 L66.5,701.5 L61,708 L57,702 Z" fill="#c4c4c4"/><circle cx="59.5" cy="698" r="1" fill="#2b2b2b"/>
<rect x="95" y="694" width="1" height="14" fill="#222"/>
<rect x="191" y="694" width="1" height="14" fill="#222"/>
<rect x="500" y="694" width="1" height="14" fill="#222"/>
<path d="M196.5,702 Q196.5,696 200,696 Q203.5,696 203.5,702 Z" fill="#c4c4c4"/><rect x="195" y="702" width="10" height="1.2" fill="#c4c4c4"/><path d="M198,703 L197,706 M200,703 L200,706 M202,703 L203,706" stroke="#c4c4c4" stroke-width="1.1"/><circle cx="198.5" cy="699" r="0.9" fill="#232323"/><circle cx="201.5" cy="699" r="0.9" fill="#232323"/>
<circle cx="211" cy="701" r="2.5" fill="none" stroke="#c4c4c4" stroke-width="1.3"/><path d="M211,696 L211,698 M211,704 L211,706 M206,701 L208,701 M214,701 L216,701" stroke="#c4c4c4" stroke-width="1.1"/>
<path d="M218.5,696 L226,706" stroke="#c4c4c4" stroke-width="1.3"/>
<text x="228.5" y="706" font-family="Liberation Serif" font-style="italic" font-size="12" fill="#c4c4c4">fx</text>
<rect x="239.5" y="696.5" width="9" height="11" fill="none" stroke="#c4c4c4" stroke-width="1.2"/><rect x="241.5" y="698.5" width="5" height="6" fill="#c4c4c4"/>
<ellipse cx="255" cy="701.5" rx="4.5" ry="5.5" fill="none" stroke="#9a9a9a" stroke-width="1.2"/><ellipse cx="253.5" cy="703" rx="3.5" ry="4" fill="#8a8a8a"/>
<circle cx="266" cy="701.5" r="4.3" fill="#c4c4c4"/><path d="M263,705 L269,698 L269,705 Z" fill="#2b2b2b"/>
<path d="M277.5,696 L282,698.5 L282,704 L277.5,706.5 L273,704 L273,698.5 Z M273,698.5 L277.5,701 L282,698.5 M277.5,701 L277.5,706.5" fill="none" stroke="#c4c4c4" stroke-width="1.1"/>
<rect x="0" y="711" width="514" height="16" fill="#3a3a3a"/>
<rect x="0" y="727" width="514" height="1" fill="#232323"/>
<rect x="0" y="711" width="10" height="16" fill="#2a2a2a"/>
<rect x="22" y="712" width="10" height="15" fill="#2a2a2a"/><rect x="33" y="712" width="9" height="15" fill="#2a2a2a"/>
<path d="M1,718.5 Q5,714 9,718.5 Q5,723 1,718.5 Z" fill="#c4c4c4"/><circle cx="5" cy="718.5" r="1.6" fill="#2a2a2a"/>
<polygon points="50.5,715 56,718.5 50.5,722" fill="#bdbdbd"/>
<rect x="59" y="712.5" width="10" height="13" fill="#5b7ff0"/>
<polygon points="101.5,713 102.9,716.8 106.7,716.8 103.6,719.2 104.8,723 101.5,720.7 98.2,723 99.4,719.2 96.3,716.8 100.1,716.8" fill="#d0d0d0"/>
<rect x="108" y="710" width="83" height="17" fill="#aaaaaa"/>
<path d="M196.5,720 Q196.5,714 200,714 Q203.5,714 203.5,720 Z" fill="#c4c4c4"/><rect x="195" y="720" width="10" height="1.2" fill="#c4c4c4"/><path d="M198,721 L197,724 M200,721 L200,724 M202,721 L203,724" stroke="#c4c4c4" stroke-width="1.1"/><circle cx="198.5" cy="717" r="0.9" fill="#232323"/><circle cx="201.5" cy="717" r="0.9" fill="#232323"/>
<rect x="206" y="712" width="10" height="15" fill="#2a2a2a"/><circle cx="211" cy="719" r="2" fill="none" stroke="#6a6a6a" stroke-width="1"/><path d="M211,715 L211,716.5 M211,721.5 L211,723 M207,719 L208.5,719 M213.5,719 L215,719" stroke="#6a6a6a" stroke-width="1"/>
<rect x="217" y="712" width="10" height="15" fill="#252525"/><path d="M218.5,724 L225.5,714" stroke="#c4c4c4" stroke-width="1.3"/>
<rect x="250" y="712" width="10" height="15" fill="#2a2a2a"/>
<rect x="261" y="712" width="10" height="15" fill="#2a2a2a"/>
<rect x="272" y="712" width="10" height="15" fill="#2a2a2a"/>
<rect x="295" y="711.5" width="51" height="15" fill="#1e1e1e"/>
<path d="M340,717 L342.7,719.7 L345.4,717" stroke="#b0b0b0" stroke-width="1.1" fill="none"/>
<rect x="351" y="713" width="9" height="12" fill="#2a2a2a"/>
<path d="M424,715 Q428,715 428,719 Q428,723.5 424,723.5 Q420,723.5 420,719.5 Q420,716.5 423.5,716.8 Q426,717 426,719.3 Q426,721.5 424,721.5 Q422,721.5 422,719.5" fill="none" stroke="#9a9a9a" stroke-width="1.1"/>
<rect x="433" y="711.5" width="66" height="15" fill="#1e1e1e"/>
<path d="M491,717 L493.7,719.7 L496.4,717" stroke="#b0b0b0" stroke-width="1.1" fill="none"/>
<rect x="0" y="728" width="514" height="16" fill="#2e2e2e"/>
<rect x="0" y="744" width="514" height="1" fill="#232323"/>
<rect x="0" y="728" width="10" height="16" fill="#2a2a2a"/>
<rect x="22" y="729" width="10" height="15" fill="#2a2a2a"/><rect x="33" y="729" width="9" height="15" fill="#2a2a2a"/>
<path d="M1,735.5 Q5,731 9,735.5 Q5,740 1,735.5 Z" fill="#c4c4c4"/><circle cx="5" cy="735.5" r="1.6" fill="#2a2a2a"/>
<polygon points="50.5,732 56,735.5 50.5,739" fill="#bdbdbd"/>
<rect x="59" y="729.5" width="10" height="13" fill="#5b7ff0"/>
<polygon points="101.5,730 102.9,733.8 106.7,733.8 103.6,736.2 104.8,740 101.5,737.7 98.2,740 99.4,736.2 96.3,733.8 100.1,733.8" fill="#d0d0d0"/>
<path d="M196.5,737 Q196.5,731 200,731 Q203.5,731 203.5,737 Z" fill="#c4c4c4"/><rect x="195" y="737" width="10" height="1.2" fill="#c4c4c4"/><path d="M198,738 L197,741 M200,738 L200,741 M202,738 L203,741" stroke="#c4c4c4" stroke-width="1.1"/><circle cx="198.5" cy="734" r="0.9" fill="#232323"/><circle cx="201.5" cy="734" r="0.9" fill="#232323"/>
<rect x="206" y="729" width="10" height="15" fill="#2a2a2a"/><circle cx="211" cy="736" r="2" fill="none" stroke="#6a6a6a" stroke-width="1"/><path d="M211,732 L211,733.5 M211,738.5 L211,740 M207,736 L208.5,736 M213.5,736 L215,736" stroke="#6a6a6a" stroke-width="1"/>
<rect x="217" y="729" width="10" height="15" fill="#252525"/><path d="M218.5,741 L225.5,731" stroke="#c4c4c4" stroke-width="1.3"/>
<rect x="250" y="729" width="10" height="15" fill="#2a2a2a"/>
<rect x="261" y="729" width="10" height="15" fill="#2a2a2a"/>
<rect x="272" y="729" width="10" height="15" fill="#2a2a2a"/>
<rect x="295" y="728.5" width="51" height="15" fill="#1e1e1e"/>
<path d="M340,734 L342.7,736.7 L345.4,734" stroke="#b0b0b0" stroke-width="1.1" fill="none"/>
<rect x="351" y="730" width="9" height="12" fill="#2a2a2a"/>
<rect x="364" y="728.5" width="49" height="15" fill="#1e1e1e"/>
<path d="M403,734 L405.7,736.7 L408.4,734" stroke="#b0b0b0" stroke-width="1.1" fill="none"/>
<path d="M424,732 Q428,732 428,736 Q428,740.5 424,740.5 Q420,740.5 420,736.5 Q420,733.5 423.5,733.8 Q426,734 426,736.3 Q426,738.5 424,738.5 Q422,738.5 422,736.5" fill="none" stroke="#9a9a9a" stroke-width="1.1"/>
<rect x="433" y="728.5" width="66" height="15" fill="#1e1e1e"/>
<path d="M491,734 L493.7,736.7 L496.4,734" stroke="#b0b0b0" stroke-width="1.1" fill="none"/>
<rect x="0" y="745" width="514" height="16" fill="#2e2e2e"/>
<rect x="0" y="761" width="514" height="1" fill="#232323"/>
<rect x="0" y="745" width="10" height="16" fill="#2a2a2a"/>
<rect x="22" y="746" width="10" height="15" fill="#2a2a2a"/><rect x="33" y="746" width="9" height="15" fill="#2a2a2a"/>
<path d="M1,752.5 Q5,748 9,752.5 Q5,757 1,752.5 Z" fill="#c4c4c4"/><circle cx="5" cy="752.5" r="1.6" fill="#2a2a2a"/>
<polygon points="50.5,749 56,752.5 50.5,756" fill="#bdbdbd"/>
<rect x="59" y="746.5" width="10" height="13" fill="#e0463a"/>
<rect x="97.5" y="747.5" width="9" height="11.5" fill="#a9dcff" stroke="#e8e8e8" stroke-width="1"/>
<path d="M196.5,754 Q196.5,748 200,748 Q203.5,748 203.5,754 Z" fill="#c4c4c4"/><rect x="195" y="754" width="10" height="1.2" fill="#c4c4c4"/><path d="M198,755 L197,758 M200,755 L200,758 M202,755 L203,758" stroke="#c4c4c4" stroke-width="1.1"/><circle cx="198.5" cy="751" r="0.9" fill="#232323"/><circle cx="201.5" cy="751" r="0.9" fill="#232323"/>
<rect x="206" y="746" width="10" height="15" fill="#2a2a2a"/>
<rect x="217" y="746" width="10" height="15" fill="#252525"/><path d="M218.5,758 L225.5,748" stroke="#c4c4c4" stroke-width="1.3"/>
<rect x="250" y="746" width="10" height="15" fill="#2a2a2a"/>
<rect x="261" y="746" width="10" height="15" fill="#2a2a2a"/>
<rect x="272" y="746" width="10" height="15" fill="#2a2a2a"/>
<rect x="295" y="745.5" width="51" height="15" fill="#1e1e1e"/>
<path d="M340,751 L342.7,753.7 L345.4,751" stroke="#b0b0b0" stroke-width="1.1" fill="none"/>
<rect x="351" y="747" width="9" height="12" fill="#2a2a2a"/>
<rect x="364" y="745.5" width="49" height="15" fill="#1e1e1e"/>
<path d="M403,751 L405.7,753.7 L408.4,751" stroke="#b0b0b0" stroke-width="1.1" fill="none"/>
<path d="M424,749 Q428,749 428,753 Q428,757.5 424,757.5 Q420,757.5 420,753.5 Q420,750.5 423.5,750.8 Q426,751 426,753.3 Q426,755.5 424,755.5 Q422,755.5 422,753.5" fill="none" stroke="#9a9a9a" stroke-width="1.1"/>
<rect x="433" y="745.5" width="66" height="15" fill="#1e1e1e"/>
<path d="M491,751 L493.7,753.7 L496.4,751" stroke="#b0b0b0" stroke-width="1.1" fill="none"/>
<rect x="514" y="660" width="1.5" height="129" fill="#1a1a1a"/>
<rect x="516" y="662" width="710" height="9" fill="#6a6a6a"/>
<rect x="516" y="671" width="720" height="20" fill="#1f1f1f"/>
<path d="M520,662 L520,671 L518,671 Q516,671 516,669 L516,664 Q516,662 518,662 Z" fill="#3c8ef0"/>
<path d="M1221,662 L1223,662 Q1226,662 1226,666.5 Q1226,671 1223,671 L1221,671 Z" fill="#3c8ef0"/>
<rect x="520" y="686" width="1" height="4" fill="#9a9a9a"/>
<rect x="660" y="686" width="1" height="4" fill="#9a9a9a"/>
<rect x="800" y="686" width="1" height="4" fill="#9a9a9a"/>
<rect x="940" y="686" width="1" height="4" fill="#9a9a9a"/>
<rect x="1080" y="686" width="1" height="4" fill="#9a9a9a"/>
<rect x="1220" y="686" width="1" height="4" fill="#9a9a9a"/>
<rect x="516" y="691" width="705" height="15" fill="#666666"/>
<path d="M520,691 L520,706 L518.5,706 Q516,706 516,703 L516,694 Q516,691 518.5,691 Z" fill="#3c8ef0"/>
<path d="M1221,691 L1223,691 Q1226,691 1226,694 L1226,703 Q1226,706 1223,706 L1221,706 Z" fill="#3c8ef0"/>
<rect x="520" y="706" width="701" height="3" fill="#22a32e"/>
<rect x="1221" y="706" width="7" height="83" fill="#2c2c2c"/><rect x="1228" y="706" width="8" height="83" fill="#232323"/>
<rect x="516" y="709" width="705" height="1.5" fill="#1e1e1e"/>
<defs><linearGradient id="g1" x1="0" y1="0" x2="0" y2="1"><stop offset="0" stop-color="#6e8ce8"/><stop offset="0.5" stop-color="#5a78de"/><stop offset="1" stop-color="#4a64c8"/></linearGradient></defs>
<rect x="516" y="711" width="705" height="16" fill="#2e2e2e"/>
<rect x="521" y="711" width="700" height="16" fill="url(#g1)"/><rect x="521" y="711" width="700" height="1" fill="#8aa2ee"/>
<rect x="516" y="727" width="705" height="1" fill="#2a2a2a"/>
<rect x="521" y="728" width="700" height="16" fill="#52639c"/>
<rect x="516" y="744" width="705" height="1" fill="#2a2a2a"/>
<rect x="521" y="745" width="700" height="16" fill="#80433b"/>
<rect x="516" y="761" width="705" height="28" fill="#282828"/>
<rect x="520" y="674" width="1.2" height="115" fill="#3c8ef0"/>
<path d="M516.5,674 L524.5,674 L524.5,684 L520.5,690 L516.5,684 Z" fill="#3c8ef0"/>
<path d="M1229,691 L1236,691 L1236,701 L1232.5,704 L1229,701 Z" fill="#cfcfcf"/>
<path d="M1230,719 L1233,714 L1236,716 L1236,724 L1233,724 Z" fill="none" stroke="#c4c4c4" stroke-width="1.2"/>
</svg>
<div class="t m" style="left:17px;top:637px;color:#9a9a9a">Render Queue</div>
<div class="t" style="left:127px;top:635px;color:#c8c8c8;font-size:12px;transform:scaleX(.85);transform-origin:0 0">箭头动画</div>
<div class="t" style="left:9px;top:661.5px;color:#3a8ef0;font-size:15.5px;font-weight:bold;transform:scaleX(.74);transform-origin:0 0">0:00:00:00</div>
<div class="t n" style="left:4px;top:677px;color:#2b5e9e;font-size:11px">00000 (25.00 fps)</div>
<div class="t n" style="left:74px;top:696px;color:#8a8a8a;font-size:10px">#&nbsp; .</div>
<div class="t n" style="left:99px;top:696px;color:#8a8a8a;font-size:9.5px">Source Name</div>
<div class="t n" style="left:297px;top:696px;color:#8a8a8a;font-size:9.5px">Mode&nbsp; .</div>
<div class="t n" style="left:353px;top:696px;color:#8a8a8a;font-size:9.5px">T&nbsp; .TrkMat</div>
<div class="t n" style="left:420px;top:696px;color:#8a8a8a;font-size:9.5px">Parent</div>
<div class="t" style="left:75px;top:713.5px;color:#c4c4c4;font-size:12.5px;font-weight:bold;transform:scaleX(.8);transform-origin:0 0">1</div>
<div class="t" style="left:112px;top:713.5px;color:#262626;font-size:12px;font-weight:bold;transform:scaleX(.82);transform-origin:0 0">Shape Layer 2</div>
<div class="t n" style="left:300px;top:712.5px;color:#c4c4c4;font-size:11.5px">Normal</div>
<div class="t n" style="left:439px;top:712.5px;color:#c4c4c4;font-size:11.5px">None</div>
<div class="t" style="left:75px;top:730.5px;color:#c4c4c4;font-size:12.5px;font-weight:bold;transform:scaleX(.8);transform-origin:0 0">2</div>
<div class="t" style="left:112px;top:730.5px;color:#c8c8c8;font-size:12px;font-weight:bold;transform:scaleX(.82);transform-origin:0 0">Shape Layer 1</div>
<div class="t n" style="left:300px;top:729.5px;color:#c4c4c4;font-size:11.5px">Normal</div>
<div class="t n" style="left:370px;top:729.5px;color:#c4c4c4;font-size:11.5px">None</div>
<div class="t n" style="left:439px;top:729.5px;color:#c4c4c4;font-size:11.5px">None</div>
<div class="t" style="left:75px;top:747.5px;color:#c4c4c4;font-size:12.5px;font-weight:bold;transform:scaleX(.8);transform-origin:0 0">3</div>
<div class="t" style="left:112px;top:747.5px;color:#c8c8c8;font-size:12px;font-weight:bold;transform:scaleX(.82);transform-origin:0 0">BG</div>
<div class="t n" style="left:300px;top:746.5px;color:#c4c4c4;font-size:11.5px">Normal</div>
<div class="t n" style="left:370px;top:746.5px;color:#c4c4c4;font-size:11.5px">None</div>
<div class="t n" style="left:439px;top:746.5px;color:#c4c4c4;font-size:11.5px">None</div>
<div class="t n" style="left:518px;top:673.5px;color:#b0b0b0;font-size:10.5px">00s</div>
<div class="t n" style="left:654px;top:673.5px;color:#b0b0b0;font-size:10.5px">01s</div>
<div class="t n" style="left:794px;top:673.5px;color:#b0b0b0;font-size:10.5px">02s</div>
<div class="t n" style="left:934px;top:673.5px;color:#b0b0b0;font-size:10.5px">03s</div>
<div class="t n" style="left:1074px;top:673.5px;color:#b0b0b0;font-size:10.5px">04s</div>
<div class="t n" style="left:1214px;top:673.5px;color:#b0b0b0;font-size:10.5px">05s</div>


<!-- ANNOT -->
<svg class="a" style="left:0;top:0" width="1236" height="789" viewBox="0 0 1236 789">
<polygon points="783.3,364.1 807.3,367.5 802.4,372.2 857.1,407.5 946.4,465.7 1011.0,507.7 1040.9,527.0 1039.1,529.7 1009.0,510.9 943.6,470.3 852.9,414.2 797.6,379.6 795.9,383.8" fill="#e81c24"/><circle cx="1040" cy="528.3" r="1.6" fill="#e81c24"/>
</svg>
</body></html>
